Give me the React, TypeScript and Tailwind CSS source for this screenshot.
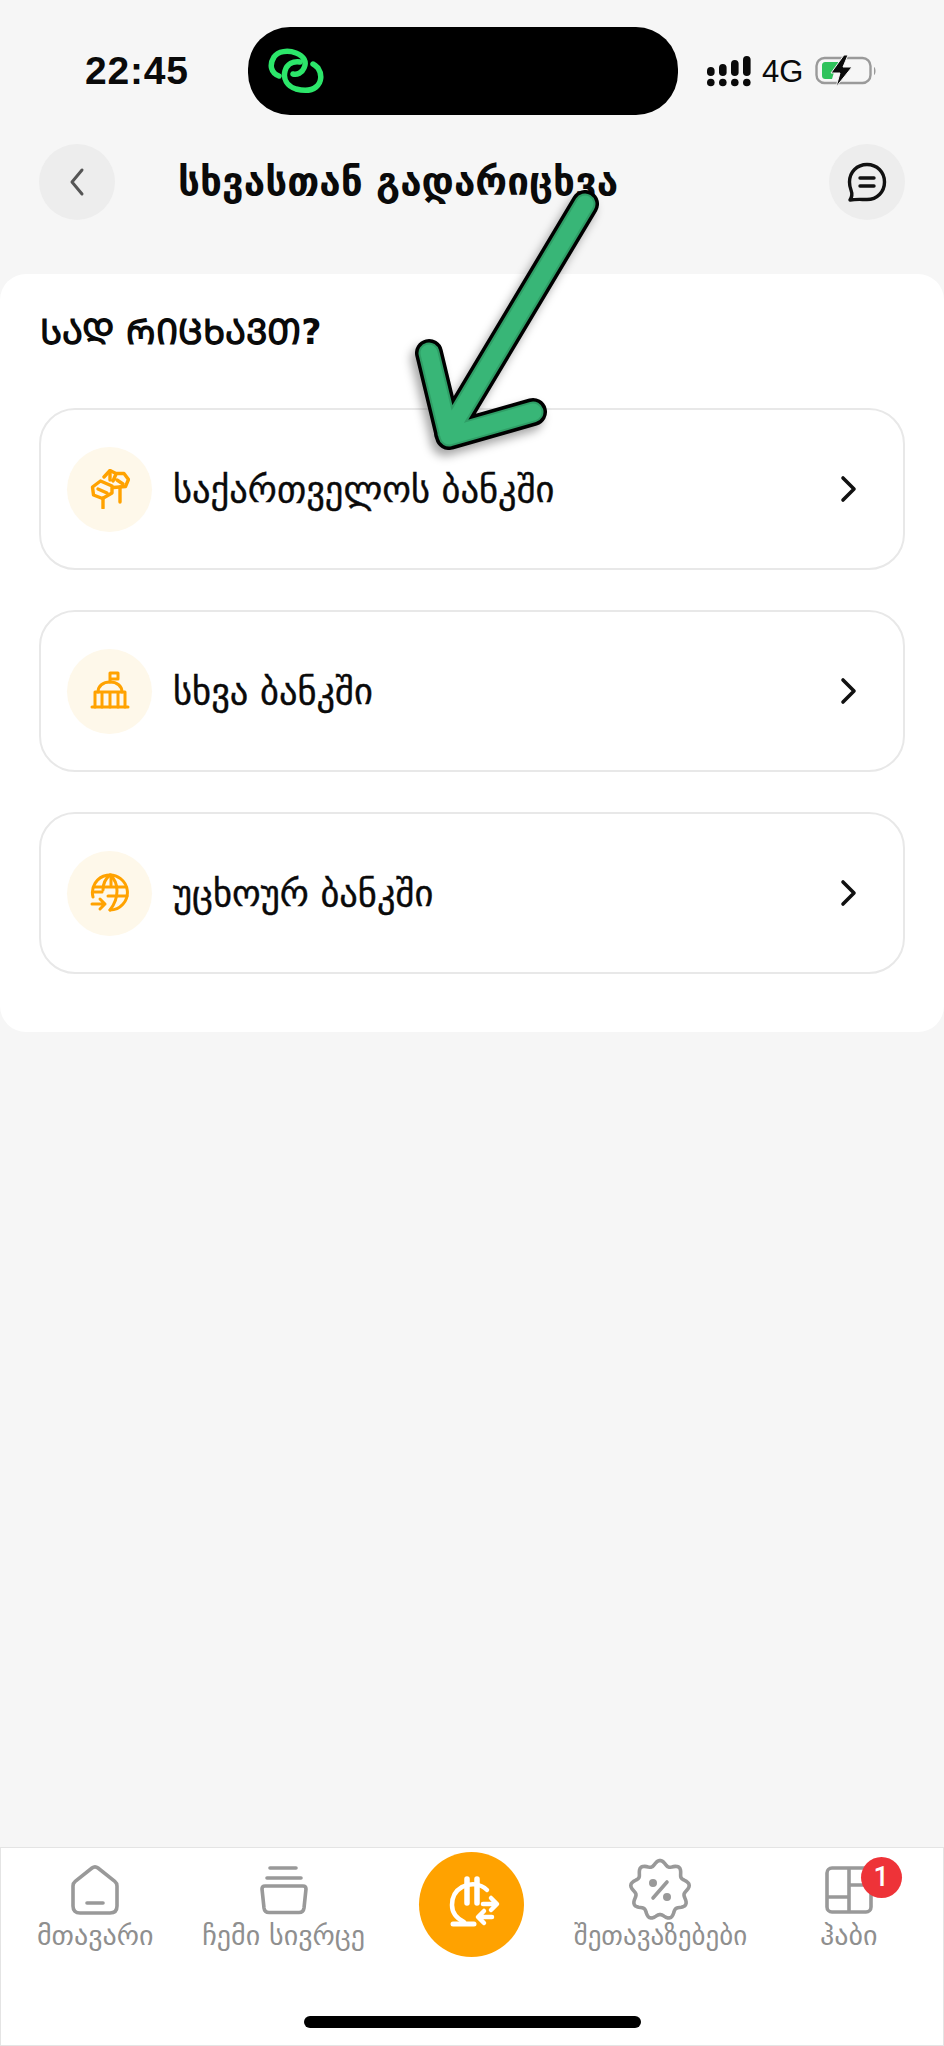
const georgian = "font-['DejaVu_Sans',sans-serif]"

const badgePath = (() => {
  const pts: string[] = []
  for (let i = 0; i <= 120; i++) {
    const a = (i / 120) * Math.PI * 2
    const r = 27 + 2.6 * Math.cos(a * 9)
    pts.push(`${(32 + r * Math.sin(a)).toFixed(2)} ${(32 - r * Math.cos(a)).toFixed(2)}`)
  }
  return 'M' + pts.join('L') + 'Z'
})()

function Chevron() {
  return (
    <svg width="24" height="32" viewBox="0 0 24 32" fill="none" stroke="#111" strokeWidth="3.6" strokeLinecap="round" strokeLinejoin="round">
      <path d="M7 5l11 11L7 27" />
    </svg>
  )
}

function TreeIcon() {
  return (
    <svg width="40" height="40" viewBox="0 0 40 40" fill="none" stroke="#ffa200" strokeWidth="3.4" strokeLinejoin="round" strokeLinecap="round">
      <path d="M2.500 18l8-6 11.500 5v7l-9.500 5.500-9-3.500z" />
      <path d="M14 8l6-6.500 6 3h8l4.500 6-3 7-12 1" />
      <path d="M20 2v9M26 5l-3 7M8 20l9 4M27 11l6 4" />
      <path d="M13 29v10M30 18v15" />
    </svg>
  )
}

function BankIcon() {
  return (
    <svg width="40" height="40" viewBox="0 0 40 40" fill="none" stroke="#ffa200" strokeWidth="3" strokeLinejoin="round" strokeLinecap="round">
      <path d="M2 36h36" />
      <path d="M5 36V21h30v15M12 21v15M20 21v15M28 21v15" />
      <path d="M8 21c0-6 5-10 12-10s12 4 12 10" />
      <path d="M20 11V2h8v6h-8" />
    </svg>
  )
}

function GlobeIcon() {
  return (
    <svg width="40" height="40" viewBox="0 0 40 40" fill="none" stroke="#ffa200" strokeWidth="3" strokeLinejoin="round" strokeLinecap="round">
      <path d="M3 24A17.500 17.500 0 1 1 20 37" />
      <path d="M20 2c-5 4-7 9-7 15M20 2c5 4 7 10 7 16 0 7-3 14-7 19" />
      <path d="M4 14h32M3 19h9M18 23h19M21 2v10" />
      <path d="M2 31h13M10 26l5 5-5 5" />
    </svg>
  )
}

function HomeIcon() {
  return (
    <svg width="48" height="50" viewBox="0 0 48 50" fill="none" stroke="#999" strokeWidth="3.600" strokeLinejoin="round" strokeLinecap="round">
      <path d="M2 21c0-2 .8-3.500 2.200-4.600L21 3c2-1.500 4-1.500 6 0l16.800 13.400c1.400 1.100 2.200 2.600 2.200 4.600v20c0 4.500-2.500 7-7 7H9c-4.500 0-7-2.500-7-7z" />
      <path d="M16 38h16" />
    </svg>
  )
}

function SpaceIcon() {
  return (
    <svg width="48" height="50" viewBox="0 0 48 50" fill="none" stroke="#999" strokeWidth="3.600" strokeLinejoin="round" strokeLinecap="round">
      <path d="M10 3h26M7 13h34" />
      <path d="M5 21h38c2 0 3 1 3 3l-2 19c-.4 3-2 4.500-5 4.500H9c-3 0-4.600-1.500-5-4.500L2 24c0-2 1-3 3-3z" />
    </svg>
  )
}

function OfferIcon() {
  return (
    <svg width="64" height="64" viewBox="0 0 64 64" fill="none" stroke="#999" strokeWidth="3.600" strokeLinecap="round">
      <path d={badgePath} strokeLinejoin="round" />
      <path d="M39 24L25 40" />
      <circle cx="25" cy="25" r="2.200" fill="#999" />
      <circle cx="39" cy="39" r="2.200" fill="#999" />
    </svg>
  )
}

function HubIcon() {
  return (
    <svg width="48" height="48" viewBox="0 0 48 48" fill="none" stroke="#999" strokeWidth="3.600" strokeLinejoin="round">
      <rect x="2" y="2" width="44" height="44" rx="5" />
      <path d="M24 2v44M2 31h22M24 19h22" />
    </svg>
  )
}

function LariIcon() {
  return (
    <svg width="105" height="105" viewBox="0 0 105 105" fill="none" stroke="#fff" strokeWidth="5" strokeLinecap="round" strokeLinejoin="round">
      <path d="M48 27v24M58 27v24" strokeWidth="5.500" />
      <path d="M68 38C61 31 51 31 43 35 36 39 33 46 33 53c0 7 4 13 12 17" strokeWidth="4.500" />
      <path d="M34 72h21" />
      <path d="M64 52h13M72 46l6 6-6 6" strokeWidth="4.500" />
      <path d="M73 65H60M65 59l-6 6 6 6" strokeWidth="4.500" />
    </svg>
  )
}

function Signal() {
  return (
    <svg width="44" height="31" viewBox="0 0 44 31" fill="#0a0a0a">
      <circle cx="3.800" cy="26.500" r="3.800" />
      <circle cx="15.800" cy="26.500" r="3.800" />
      <circle cx="27.800" cy="26.500" r="3.800" />
      <circle cx="39.800" cy="26.500" r="3.800" />
      <rect x="0" y="11" width="7.600" height="9" rx="3.800" />
      <rect x="12" y="8" width="7.600" height="12" rx="3.800" />
      <rect x="24" y="4" width="7.600" height="16" rx="3.800" />
      <rect x="36" y="0" width="7.600" height="20" rx="3.800" />
    </svg>
  )
}

function Battery() {
  return (
    <svg width="62" height="32" viewBox="0 0 62 32">
      <rect x="1.500" y="3" width="54" height="25" rx="8" fill="none" stroke="#9a9a9a" strokeWidth="2.400" />
      <path d="M11 7h16l-3 7h-4l-3 10H11c-3 0-4-1-4-4V11c0-3 1-4 4-4z" fill="#2fc25b" />
      <path d="M59 12c2 1 2 7 0 8z" fill="#9a9a9a" />
      <path d="M29 0L16 18h9l-4 14 16-20h-9l5-12z" fill="#0a0a0a" stroke="#f6f6f6" strokeWidth="1" />
    </svg>
  )
}

function LinkLogo() {
  return (
    <svg width="56" height="46" viewBox="0 0 56 46" fill="none" stroke="#2ce66a" strokeWidth="5.500" strokeLinecap="round" strokeLinejoin="round">
      <path d="M11 28C3 25 1 17 6 9 10 3 20 2 28 5c8 3 11 9 8 15-2 5-7 7-11 6" />
      <path d="M32 14c-7-1-13 2-15 9-2 8 2 15 11 18 8 2 15 2 20-2 6-5 6-13 2-19-2-2-3-3-5-4" />
    </svg>
  )
}

const banks = [
  { name: 'საქართველოს ბანკში', icon: <TreeIcon /> },
  { name: 'სხვა ბანკში', icon: <BankIcon /> },
  { name: 'უცხოურ ბანკში', icon: <GlobeIcon /> },
]

const navLabel = 'mt-[2px] text-[28px] leading-[36px] whitespace-nowrap text-[#8f8f8f]'

export default function App() {
  return (
    <div className={`relative flex h-[2046px] w-[944px] flex-col overflow-hidden bg-[#f6f6f6] ${georgian}`}>
      {/* Status bar */}
      <div className="flex h-[88px] mt-[27px] items-center pl-[85px]">
        <span className="w-[163px] text-[39px] font-bold tracking-[0.8px] text-[#0a0a0a] font-['Liberation_Sans',sans-serif]">22:45</span>
        <div className="flex h-[88px] w-[430px] items-center rounded-[42px] bg-black pl-[20px]">
          <LinkLogo />
        </div>
        <div className="ml-[29px] flex items-center">
          <Signal />
          <span className="ml-[11px] text-[31px] leading-none text-[#0a0a0a] font-['Liberation_Sans',sans-serif]">4G</span>
          <span className="ml-[12px]"><Battery /></span>
        </div>
      </div>

      {/* Header */}
      <div className="mt-[29px] flex h-[76px] items-center px-[39px]">
        <button className="flex h-[76px] w-[76px] items-center justify-center rounded-full bg-[#ededed]">
          <svg width="20" height="30" viewBox="0 0 20 30" fill="none" stroke="#555" strokeWidth="3" strokeLinecap="round" strokeLinejoin="round">
            <path d="M15 3L5 15l10 12" />
          </svg>
        </button>
        <h1 className="ml-[63px] flex-1 whitespace-nowrap text-[38.7px] font-bold text-[#0a0a0a]">სხვასთან გადარიცხვა</h1>
        <button className="flex h-[76px] w-[76px] items-center justify-center rounded-full bg-[#ededed]">
          <svg width="40" height="40" viewBox="0 0 40 40" fill="none" stroke="#111" strokeWidth="3.400" strokeLinecap="round" strokeLinejoin="round">
            <path d="M20 2.500c10 0 17.500 7.500 17.500 17.500S30 37.500 20 37.500c-6 0-11-.5-17 .5 2-3 2.500-6 1-10C3 25.500 2.500 23 2.500 20 2.500 10 10 2.500 20 2.500z" />
            <path d="M13 16h14M13 24h14" />
          </svg>
        </button>
      </div>

      {/* Main card */}
      <div className="mt-[54px] h-[758px] rounded-[26px] bg-white px-[39px] pt-[38px]">
        <h2 className="ml-[1px] text-[35px] font-bold leading-[40px] text-[#0a0a0a]">ᲡᲐᲓ ᲠᲘᲪᲮᲐᲕᲗ?</h2>
        <div className="mt-[56px] flex flex-col gap-[40px]">
          {banks.map(bank => (
            <div key={bank.name} className="flex h-[162px] w-[866px] items-center rounded-[36px] border-2 border-[#e8e8e8] pl-[26px] pr-[43px]">
              <div className="flex h-[85px] w-[85px] shrink-0 items-center justify-center rounded-full bg-[#fef8ea]">
                {bank.icon}
              </div>
              <span className="ml-[21px] flex-1 pt-[3px] text-[36.5px] text-[#0a0a0a] [-webkit-text-stroke:0.4px_#0a0a0a]">{bank.name}</span>
              <Chevron />
            </div>
          ))}
        </div>
      </div>

      <div className="flex-1" />

      {/* Bottom nav */}
      <div className="relative h-[199px] border border-[#e4e4e4] bg-white">
        <div className="grid grid-cols-5 pt-[4px]">
          <div className="flex flex-col items-center">
            <div className="flex h-[64px] items-center pt-[11px]"><HomeIcon /></div>
            <span className={navLabel}>მთავარი</span>
          </div>
          <div className="flex flex-col items-center">
            <div className="flex h-[64px] items-center pt-[11px]"><SpaceIcon /></div>
            <span className={navLabel}>ჩემი სივრცე</span>
          </div>
          <div className="flex flex-col items-center">
            <div className="h-[105px] w-[105px] rounded-full bg-[#ffa200]"><LariIcon /></div>
          </div>
          <div className="flex flex-col items-center">
            <div className="flex h-[64px] items-center pt-[11px]"><OfferIcon /></div>
            <span className="mt-[2px] text-[27px] leading-[36px] whitespace-nowrap text-[#8f8f8f]">შეთავაზებები</span>
          </div>
          <div className="flex flex-col items-center">
            <div className="relative flex h-[64px] items-center pt-[11px]">
              <HubIcon />
              <span className="absolute left-[36px] top-[5px] flex h-[41px] w-[41px] items-center justify-center rounded-full bg-[#ee3338] text-[27px] font-medium text-white font-['Roboto',sans-serif]">1</span>
            </div>
            <span className={navLabel}>ჰაბი</span>
          </div>
        </div>
        {/* Home indicator */}
        <div className="absolute bottom-[17px] left-[303px] h-[12px] w-[337px] rounded-full bg-black" />
      </div>

      {/* Annotation arrow drawn over the screenshot */}
      <svg className="absolute left-[400px] top-[190px] drop-shadow-[-4px_6px_5px_rgba(0,0,0,0.35)]" width="200" height="280" viewBox="0 0 200 280" fill="none" strokeLinecap="round" strokeLinejoin="round">
        <path d="M185 14L48 243M29 163l20 83 84-24" stroke="#000" strokeWidth="28" />
        <path d="M185 14L48 243M29 163l20 83 84-24" stroke="#2f9e66" strokeWidth="21" />
        <path d="M185 14L48 243M29 163l20 83 84-24" stroke="#38b677" strokeWidth="17" />
      </svg>
    </div>
  )
}
